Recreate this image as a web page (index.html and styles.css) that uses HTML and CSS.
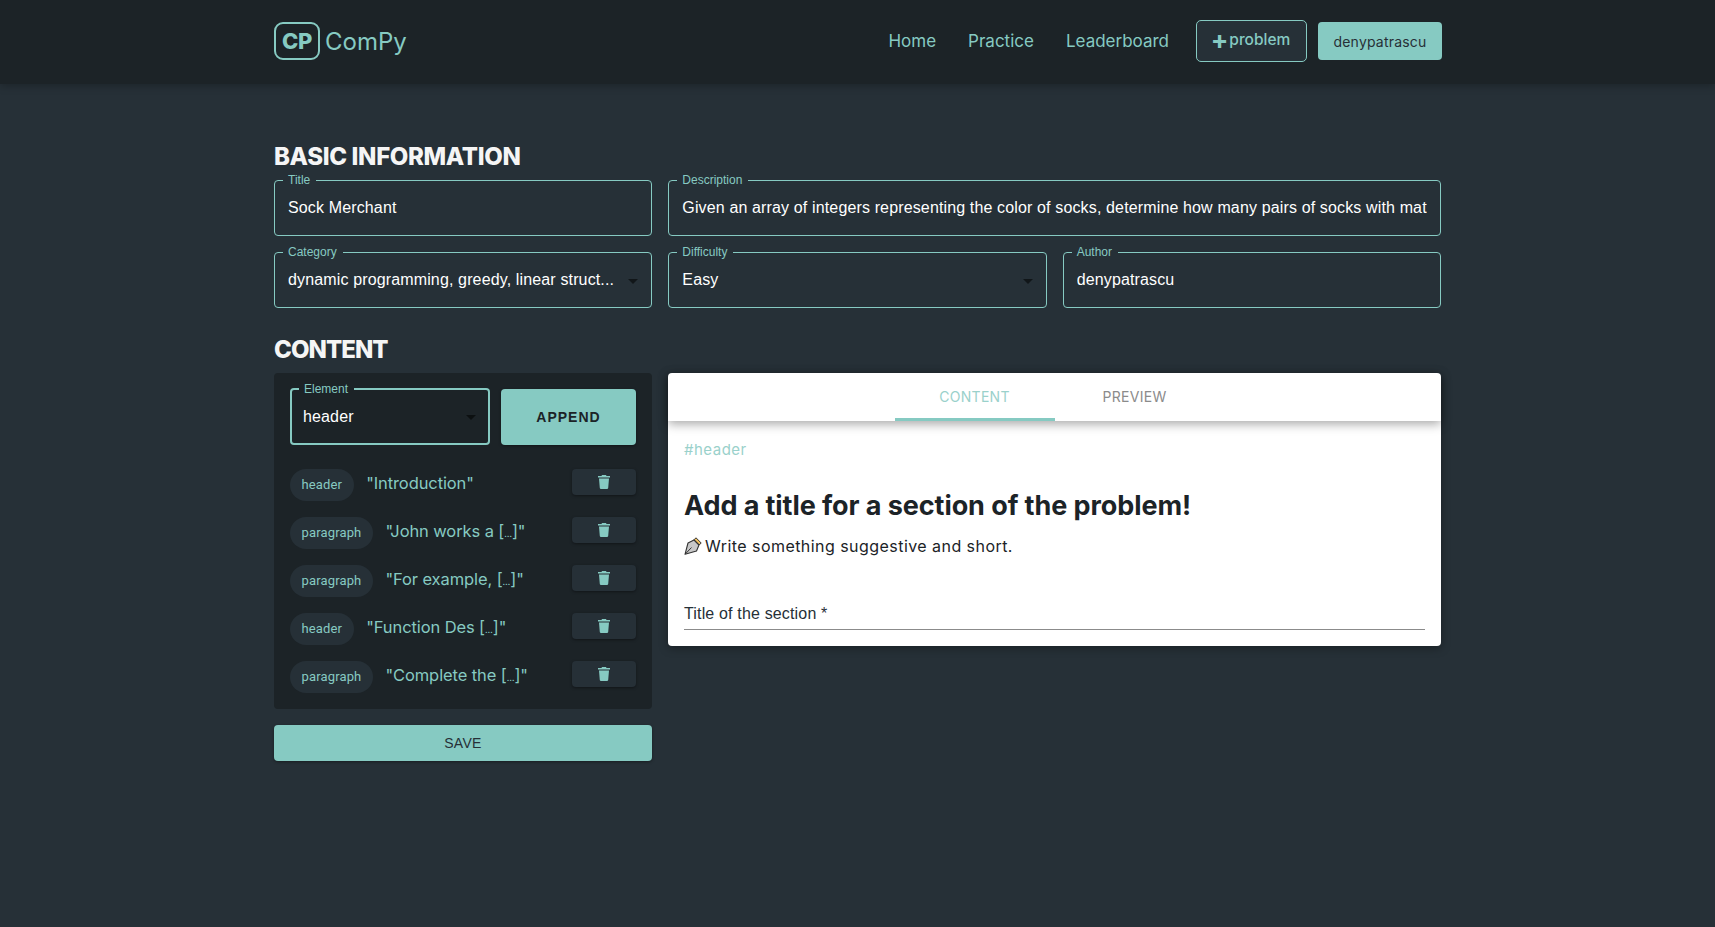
FILE: index.html
```html
<!DOCTYPE html>
<html>
<head>
  <title>ComPy</title>
  <link rel="stylesheet" href="styles.css">
</head>
<body>
  <nav class="navbar">
    <div class="container navbar-inner">
      <a class="brand">
        <span class="brand-box">CP</span>
        <span class="brand-name">ComPy</span>
      </a>
      <div class="nav-links">
        <a>Home</a>
        <a>Practice</a>
        <a>Leaderboard</a>
      </div>
      <button class="btn-problem"><span class="plus">+</span>problem</button>
      <button class="btn-user">denypatrascu</button>
    </div>
  </nav>

  <main class="container">
    <h2 class="section-title first">BASIC INFORMATION</h2>
    <div class="form-grid">
      <div class="field">
        <label>Title</label>
        <div class="field-value">Sock Merchant</div>
      </div>
      <div class="field span-2">
        <label>Description</label>
        <div class="field-value">Given an array of integers representing the color of socks, determine how many pairs of socks with mat</div>
      </div>
      <div class="field">
        <label>Category</label>
        <div class="field-value with-caret">dynamic programming, greedy, linear struct...</div>
        <span class="caret"></span>
      </div>
      <div class="field">
        <label>Difficulty</label>
        <div class="field-value">Easy</div>
        <span class="caret"></span>
      </div>
      <div class="field">
        <label>Author</label>
        <div class="field-value">denypatrascu</div>
      </div>
    </div>

    <h2 class="section-title second">CONTENT</h2>
    <div class="content-grid">
      <div class="left-col">
        <div class="panel">
          <div class="append-row">
            <div class="field field-focus">
              <label>Element</label>
              <div class="field-value">header</div>
              <span class="caret"></span>
            </div>
            <button class="btn-append">APPEND</button>
          </div>

          <div class="element-row">
            <span class="chip">header</span>
            <span class="element-text">"Introduction"</span>
            <button class="btn-delete"><svg viewBox="0 0 12 14"><path d="M4 0h4l.5 1H12v1.600H0V1h3.500zM1 3.600h10l-.8 9.300c-.1.7-.5 1.100-1.200 1.100H3c-.7 0-1.100-.4-1.200-1.100z"/></svg></button>
          </div>
          <div class="element-row">
            <span class="chip">paragraph</span>
            <span class="element-text">"John works a [<span class="dots">…</span>]"</span>
            <button class="btn-delete"><svg viewBox="0 0 12 14"><path d="M4 0h4l.5 1H12v1.600H0V1h3.500zM1 3.600h10l-.8 9.300c-.1.7-.5 1.100-1.200 1.100H3c-.7 0-1.100-.4-1.200-1.100z"/></svg></button>
          </div>
          <div class="element-row">
            <span class="chip">paragraph</span>
            <span class="element-text">"For example, [<span class="dots">…</span>]"</span>
            <button class="btn-delete"><svg viewBox="0 0 12 14"><path d="M4 0h4l.5 1H12v1.600H0V1h3.500zM1 3.600h10l-.8 9.300c-.1.7-.5 1.100-1.200 1.100H3c-.7 0-1.100-.4-1.200-1.100z"/></svg></button>
          </div>
          <div class="element-row">
            <span class="chip">header</span>
            <span class="element-text">"Function Des [<span class="dots">…</span>]"</span>
            <button class="btn-delete"><svg viewBox="0 0 12 14"><path d="M4 0h4l.5 1H12v1.600H0V1h3.500zM1 3.600h10l-.8 9.300c-.1.7-.5 1.100-1.200 1.100H3c-.7 0-1.100-.4-1.200-1.100z"/></svg></button>
          </div>
          <div class="element-row">
            <span class="chip">paragraph</span>
            <span class="element-text">"Complete the [<span class="dots">…</span>]"</span>
            <button class="btn-delete"><svg viewBox="0 0 12 14"><path d="M4 0h4l.5 1H12v1.600H0V1h3.500zM1 3.600h10l-.8 9.300c-.1.7-.5 1.100-1.200 1.100H3c-.7 0-1.100-.4-1.200-1.100z"/></svg></button>
          </div>
        </div>
        <button class="btn-save">SAVE</button>
      </div>

      <div class="card">
        <div class="tabs">
          <div class="tab active">CONTENT</div>
          <div class="tab">PREVIEW</div>
        </div>
        <div class="card-body">
          <div class="tag">#header</div>
          <h3 class="card-title">Add a title for a section of the problem!</h3>
          <p class="card-hint">
            <svg class="pen" viewBox="0 0 18 18">
              <path d="M12 .8l5.200 5.200-2 2-5.200-5.200z" fill="#f0c060" stroke="#333" stroke-width="1"/>
              <path d="M10 3l5 5-2.500 6L1 17.300 4 6z" fill="#c8c8c8" stroke="#333" stroke-width="1.100" stroke-linejoin="round"/>
              <path d="M1.500 16.800L7.500 10.500" stroke="#333" stroke-width="1"/>
            </svg>Write something suggestive and short.
          </p>
          <div class="text-input">Title of the section *</div>
        </div>
      </div>
    </div>
  </main>
</body>
</html>
```

FILE: styles.css
```css
* {
  box-sizing: border-box;
}

body {
  margin: 0;
  min-height: 927px;
  background-color: #263037;
  color: #86cac2;
  font-family: "Liberation Sans", Arial, sans-serif;
}

button {
  border: none;
  cursor: pointer;
}

.container {
  width: 1167px;
  margin: 0 auto;
}

/* navbar */
.navbar {
  height: 84px;
  background-color: #1c2327;
  box-shadow: 0 2px 8px rgba(0, 0, 0, 0.25);
}

.navbar-inner {
  display: flex;
  align-items: center;
  height: 82px;
}

.brand {
  display: flex;
  align-items: center;
  gap: 5px;
  margin-right: auto;
}

.brand-box {
  display: flex;
  align-items: center;
  justify-content: center;
  width: 46px;
  height: 38px;
  border: 2px solid #86cac2;
  border-radius: 9px;
  font-family: Inter, sans-serif;
  font-size: 22px;
  font-weight: 800;
  letter-spacing: -0.3px;
}

.brand-name {
  font-family: Inter, sans-serif;
  font-size: 24px;
}

.nav-links {
  display: flex;
  gap: 32px;
  margin-right: 27px;
  font-family: Inter, sans-serif;
  font-size: 17px;
}

.btn-problem {
  display: flex;
  align-items: center;
  justify-content: center;
  height: 42px;
  width: 111px;
  margin-right: 11px;
  padding: 0 2px 3px 0;
  border: 1px solid #86cac2;
  border-radius: 5px;
  background-color: #263037;
  color: #86cac2;
  font-family: Inter, sans-serif;
  font-size: 15.500px;
  font-weight: 500;
}

.plus {
  margin-right: 1px;
  font-size: 26px;
  font-weight: 700;
  line-height: 18px;
}

.btn-user {
  flex: none;
  height: 38px;
  width: 124px;
  margin-right: -1px;
  border-radius: 4px;
  background-color: #86cac2;
  color: #263037;
  font-family: Inter, sans-serif;
  font-size: 14px;
  letter-spacing: 0.2px;
}

/* sections */
.section-title {
  margin: 0;
  height: 30px;
  color: #f5f5f5;
  font-family: Inter, sans-serif;
  font-size: 24px;
  font-weight: 800;
  line-height: 30px;
}

.section-title.first {
  margin-top: 58px;
  margin-bottom: 8px;
  letter-spacing: -0.35px;
}

.section-title.second {
  margin-top: 27px;
  margin-bottom: 8px;
  letter-spacing: -0.95px;
}

.form-grid {
  display: grid;
  grid-template-columns: repeat(3, 1fr);
  gap: 16px;
}

.span-2 {
  grid-column: span 2;
}

.field {
  position: relative;
  height: 56px;
  padding: 0 13px;
  border: 1px solid #86cac2;
  border-radius: 4px;
  color: #fff;
  font-size: 16px;
  letter-spacing: 0.14px;
  line-height: 54px;
}

.field label {
  position: absolute;
  top: -8px;
  left: 8px;
  padding: 0 6px 0 5px;
  background-color: #263037;
  color: #86cac2;
  font-size: 12px;
  letter-spacing: 0;
  line-height: 14px;
}

.field-value {
  overflow: hidden;
  white-space: nowrap;
}

.with-caret {
  margin-right: 10px;
}

.caret {
  position: absolute;
  top: 26px;
  right: 13px;
  border-top: 5px solid rgba(0, 0, 0, 0.54);
  border-left: 5px solid transparent;
  border-right: 5px solid transparent;
}

/* content area */
.content-grid {
  display: grid;
  grid-template-columns: 378px 773px;
  gap: 16px;
  align-items: start;
}

.panel {
  height: 336px;
  padding: 16px;
  border-radius: 4px;
  background-color: #1c2327;
}

.append-row {
  display: flex;
  align-items: flex-end;
  gap: 11px;
  margin-bottom: 24px;
}

.field-focus {
  width: 200px;
  height: 57px;
  margin-top: -1px;
  border: 2px solid #86cac2;
  padding: 0 11px;
  line-height: 53px;
}

.field-focus label {
  top: -8px;
  left: 7px;
  background-color: #1c2327;
}

.field-focus .caret {
  top: 25px;
  right: 12px;
}

.btn-append {
  width: 135px;
  height: 56px;
  border-radius: 4px;
  background-color: #86cac2;
  color: #1c2327;
  font-family: "Liberation Sans", sans-serif;
  font-size: 14px;
  font-weight: 700;
  letter-spacing: 1px;
  box-shadow: 0 1px 3px rgba(0, 0, 0, 0.4);
}

.element-row {
  display: flex;
  align-items: flex-start;
  height: 32px;
  margin-bottom: 16px;
}

.chip {
  height: 32px;
  padding: 0 11.500px;
  border-radius: 16px;
  background-color: #263037;
  font-family: Roboto, sans-serif;
  font-size: 13px;
  letter-spacing: 0.15px;
  line-height: 32px;
}

.element-text {
  margin-left: 12.500px;
  font-family: Inter, sans-serif;
  font-size: 16.500px;
  letter-spacing: -0.1px;
  line-height: 28px;
}

.dots {
  font-size: 9px;
}

.btn-delete {
  display: flex;
  align-items: center;
  justify-content: center;
  width: 64px;
  height: 26px;
  margin-left: auto;
  padding: 0;
  border-radius: 4px;
  background-color: #263037;
  box-shadow: 0 1px 3px rgba(0, 0, 0, 0.4);
}

.btn-delete svg {
  width: 12px;
  height: 14px;
  fill: #86cac2;
}

.btn-save {
  display: block;
  width: 100%;
  height: 36px;
  margin-top: 16px;
  border-radius: 4px;
  background-color: #86cac2;
  color: #263037;
  font-family: "Liberation Sans", sans-serif;
  font-size: 14px;
  letter-spacing: 0.3px;
  box-shadow: 0 1px 3px rgba(0, 0, 0, 0.4);
}

/* right card */
.card {
  height: 273px;
  border-radius: 4px;
  background-color: #fff;
  color: #1c2327;
  box-shadow: 0 2px 10px rgba(0, 0, 0, 0.35);
}

.tabs {
  position: relative;
  display: flex;
  justify-content: center;
  height: 48px;
  box-shadow: 0 3px 10px rgba(0, 0, 0, 0.35);
}

.tab {
  width: 160px;
  color: #8b8b8b;
  font-family: Inter, sans-serif;
  font-size: 14px;
  letter-spacing: 0.3px;
  line-height: 48px;
  text-align: center;
}

.tab.active {
  color: #9ad1cb;
  border-bottom: 3px solid #86cac2;
}

.card-body {
  padding: 19px 16px 0;
}

.tag {
  color: #9ad1cb;
  font-family: Inter, sans-serif;
  font-size: 15px;
  line-height: 20px;
  letter-spacing: 0.5px;
}

.card-title {
  margin: 29px 0 0;
  font-family: Inter, sans-serif;
  font-size: 27px;
  font-weight: 700;
  letter-spacing: -0.08px;
  line-height: 34px;
}

.card-hint {
  display: flex;
  align-items: center;
  margin: 11px 0 0;
  font-family: Inter, sans-serif;
  font-size: 16px;
  line-height: 24px;
  letter-spacing: 0.45px;
}

.pen {
  width: 18px;
  height: 18px;
  margin-right: 3px;
}

.text-input {
  margin-top: 45px;
  height: 27px;
  border-bottom: 1px solid #8b8b8b;
  color: #263037;
  font-size: 16px;
  letter-spacing: 0.16px;
  line-height: 22px;
}
```
